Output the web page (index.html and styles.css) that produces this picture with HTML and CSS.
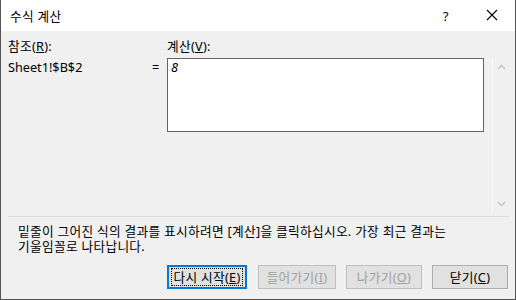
FILE: index.html
```html
<!DOCTYPE html>
<html lang="ko">
<head>
    <meta charset="UTF-8">
    <title>수식 계산</title>
    <link rel="stylesheet" href="styles.css">
</head>
<body>

<div class="dialog">
    <div class="titlebar">
        <div class="title">수식 계산</div>
        <div class="help">?</div>
        <div class="close">
            <svg width="12" height="12" viewBox="0 0 12 12">
                <path d="M1 1 L11 11 M11 1 L1 11" stroke="#000" stroke-width="1.1" fill="none"/>
            </svg>
        </div>
    </div>

    <div class="content">
        <div class="top">
            <div class="fields">
                <div class="label">참조(<u>R</u>):</div>
                <div></div>
                <div class="label">계산(<u>V</u>):</div>
                <div class="ref">Sheet1!$B$2</div>
                <div class="equals">=</div>
                <div class="result"><i>8</i></div>
            </div>
            <div class="scrollbar">
                <svg width="9" height="6" viewBox="0 0 9 6">
                    <path d="M1 5 L4.5 1.5 L8 5" stroke="#c2c2c2" stroke-width="1.5" fill="none"/>
                </svg>
                <svg width="9" height="6" viewBox="0 0 9 6">
                    <path d="M1 1 L4.5 4.5 L8 1" stroke="#c2c2c2" stroke-width="1.5" fill="none"/>
                </svg>
            </div>
        </div>

        <div class="separator"></div>

        <div class="note">
            <div>밑줄이 그어진 식의 결과를 표시하려면 [계산]을 클릭하십시오. 가장 최근 결과는</div>
            <div>기울임꼴로 나타납니다.</div>
        </div>

        <div class="buttons">
            <div class="button primary"><span class="focus">다시 시작(<u>E</u>)</span></div>
            <div class="button disabled wide">들어가기(<u>I</u>)</div>
            <div class="button disabled">나가기(<u>O</u>)</div>
            <div class="button">닫기(<u>C</u>)</div>
        </div>
    </div>
</div>

</body>
</html>
```

FILE: styles.css
```css
body {
    margin: 0;
    font-family: 'Noto Sans', 'Noto Sans CJK KR', sans-serif;
    font-size: 12.7px;
    letter-spacing: 0.3px;
    color: #000;
}

.dialog {
    width: 514px;
    height: 299px;
    border: 1px solid #555;
    border-top: none;
    background: #f0f0f0;
    display: flex;
    flex-direction: column;
}

.titlebar {
    height: 31px;
    background: #fff;
    display: flex;
    align-items: center;
}

.title {
    flex: 1;
    padding-left: 9px;
    padding-bottom: 1px;
}

.help {
    width: 46px;
    text-align: center;
}

.close {
    width: 46px;
    display: flex;
    justify-content: center;
    margin-bottom: 2px;
}

.content {
    flex: 1;
    padding: 0 6px 0 7px;
    display: flex;
    flex-direction: column;
}

.top {
    height: 185px;
    display: flex;
}

.fields {
    flex: 1;
    display: grid;
    grid-template-columns: 140px 19px 317px;
    grid-template-rows: 27px auto;
    align-content: start;
}

.label {
    align-self: center;
    line-height: 16px;
    padding-top: 2px;
}

.ref {
    line-height: 18px;
    letter-spacing: 0;
}

.equals {
    line-height: 18px;
    padding-left: 4px;
}

.result {
    height: 72px;
    border: 1px solid #646464;
    background: #fff;
    padding: 0 3px;
    line-height: 16px;
}

.scrollbar {
    width: 17px;
    margin-top: 27px;
    margin-left: 8px;
    height: 154px;
    border-left: 1px solid #fbfbfb;
    display: flex;
    flex-direction: column;
    justify-content: space-between;
    align-items: center;
    padding: 6px 0 5px;
    box-sizing: border-box;
}

.separator {
    height: 1px;
    background: #dcdcdc;
}

.note {
    padding: 7px 0 0 10px;
    line-height: 15px;
    height: 41px;
}

.buttons {
    display: flex;
    justify-content: flex-end;
    gap: 10px;
    padding-right: 1px;
}

.button {
    width: 74px;
    height: 22px;
    border: 1px solid #adadad;
    background: #e1e1e1;
    display: flex;
    align-items: center;
    justify-content: center;
    line-height: 16px;
}

.button.wide {
    width: 76px;
}

.button.primary {
    width: 76px;
    height: 20px;
    border: 2px solid #0078d7;
    margin-right: 1px;
}

.focus {
    border: 1px dotted #000;
    width: 70px;
    height: 16px;
    text-align: center;
}

.button.disabled {
    color: #a0a0a0;
    border-color: #bfbfbf;
    background: #e1e1e1;
}
```
